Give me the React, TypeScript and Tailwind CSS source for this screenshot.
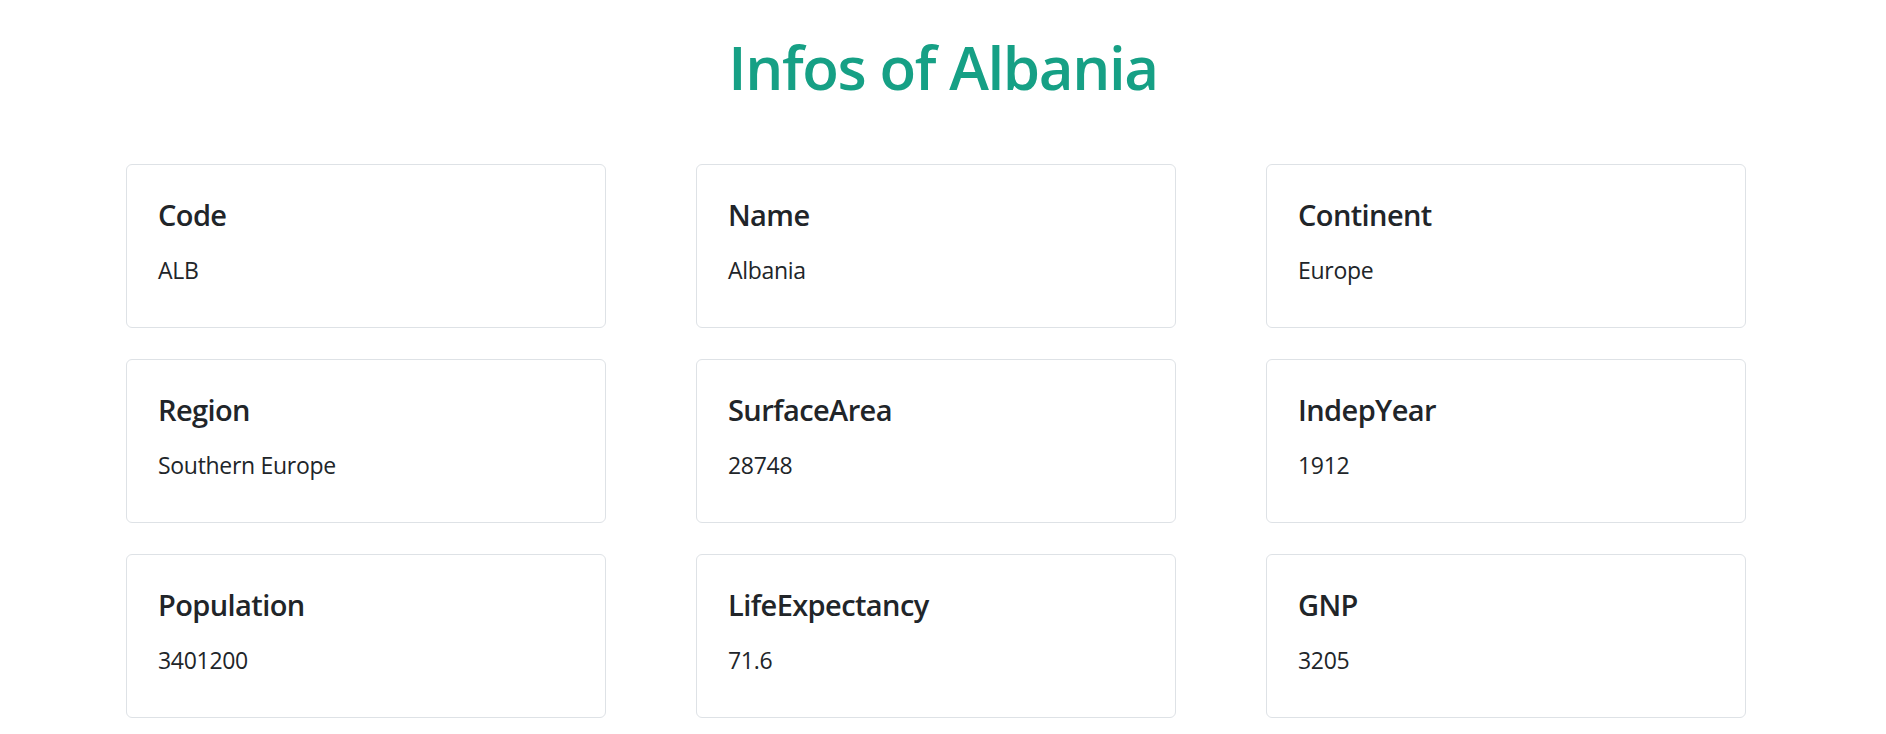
import React from 'react';

const infos = [
  { label: 'Code', value: 'ALB' },
  { label: 'Name', value: 'Albania' },
  { label: 'Continent', value: 'Europe' },
  { label: 'Region', value: 'Southern Europe' },
  { label: 'SurfaceArea', value: '28748' },
  { label: 'IndepYear', value: '1912' },
  { label: 'Population', value: '3401200' },
  { label: 'LifeExpectancy', value: '71.6' },
  { label: 'GNP', value: '3205' },
];

export default function App() {
  return (
    <div className="min-h-screen bg-white text-[#212529] font-['Open_Sans',sans-serif]">
      <h1 className="pt-[31px] text-center text-[60px] leading-[72px] font-semibold tracking-[-1.4px] text-[#16a085]">
        Infos of Albania
      </h1>

      <div className="mt-[61px] ml-[126px] w-[1620px] grid grid-cols-3 gap-x-[90px] gap-y-[31px]">
        {infos.map((info) => (
          <div
            key={info.label}
            className="h-[164px] border border-[#dee2e6] rounded-md pl-[31px] pr-8 pt-8"
          >
            <h5 className="text-[29px] leading-[35px] font-semibold tracking-[-0.6px]">{info.label}</h5>
            <p className="mt-[21px] text-[23px] leading-[34px] tracking-[-0.3px]">{info.value}</p>
          </div>
        ))}
      </div>
    </div>
  );
}
